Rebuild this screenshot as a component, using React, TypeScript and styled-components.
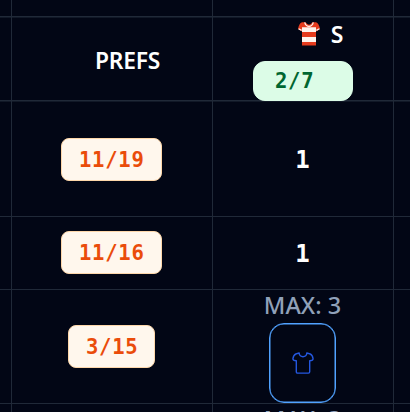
import React from "react";
import styled, { createGlobalStyle } from "styled-components";

const GlobalStyle = createGlobalStyle`
  * { box-sizing: border-box; }
  body { margin: 0; background: #020615; overflow: hidden; }
`;

const Grid = styled.main`
  display: grid;
  grid-template-columns: 12px 201px 181px 16px;
  grid-template-rows: 17px 84px 116px 73px 114px 8px;
  width: 410px;
  height: 412px;
  overflow: hidden;
  color: #fff;
  background: #020615;
  font-family: "Noto Sans", sans-serif;
`;

const Cell = styled.div<{ $top?: number; $last?: boolean; $header?: boolean }>`
  display: flex;
  flex-direction: column;
  align-items: center;
  min-width: 0;
  min-height: 0;
  padding-top: ${(p) => p.$top ?? 0}px;
  padding-right: 1px;
  border-right: ${(p) => (p.$last ? 0 : 1)}px solid #202938;
  border-bottom: 1px solid #202938;
  box-shadow: ${(p) => (p.$header ? "0 1px #111827" : "none")};
`;

const ClippedCell = styled(Cell)`
  overflow: hidden;
  border-bottom: 0;
`;

const Heading = styled.span`
  font-size: 22.8px;
  font-weight: 600;
  line-height: 30px;
  letter-spacing: -0.2px;
  padding-left: 32px;
`;

const ShiftHeading = styled.div`
  display: flex;
  align-items: center;
  gap: 11px;
  height: 32px;
  padding-left: 36px;
`;

const ShiftName = styled.span`
  font-size: 23px;
  font-weight: 600;
  line-height: 32px;
`;

const Pill = styled.span<{ $tone: "orange" | "green"; $width: number }>`
  flex: none;
  width: ${(p) => p.$width}px;
  height: ${(p) => (p.$tone === "green" ? 40 : 43)}px;
  border-radius: ${(p) => (p.$tone === "green" ? 12 : 8)}px;
  border: 1px solid ${(p) => (p.$tone === "green" ? "#dcfce7" : "#fed7aa")};
  color: ${(p) => (p.$tone === "green" ? "#016630" : "#ea4c0a")};
  background: ${(p) => (p.$tone === "green" ? "#dcfce7" : "#fff7ed")};
  padding-left: ${(p) => (p.$tone === "green" ? 21 : 17)}px;
  font: bold 20.6px / ${(p) => (p.$tone === "green" ? 39 : 43)}px "DejaVu Sans Mono", monospace;
  letter-spacing: 0.7px;
  white-space: nowrap;
`;

const HeaderPill = styled(Pill)`
  position: relative;
  z-index: 1;
  margin-top: 11px;
  margin-left: 1px;
`;

const Count = styled.span`
  font: bold 24px / 34px "DejaVu Sans Mono", monospace;
`;

const Limit = styled.span`
  flex: none;
  color: #90a1b9;
  font-size: 23.5px;
  font-weight: 500;
  line-height: 30px;
  white-space: nowrap;
`;

const ShirtButton = styled.button`
  display: flex;
  flex: none;
  align-items: center;
  justify-content: center;
  width: 67px;
  height: 80px;
  margin-top: 3px;
  padding: 0;
  border: 1px solid #51a2ff;
  box-shadow: inset 0 0 0 0.5px #51a2ff;
  border-radius: 15px;
  background: transparent;
`;

const StripedShirt = () => (
  <svg width="22" height="24" viewBox="0 0 22 24">
    <path d="M4 .3H7.5Q11 5 14.5 .3H18Q21 1.5 22 7L18 9.5V23.5H4V9.5L0 7Q1 1.5 4 .3Z" fill="#e63b1d" />
    <path d="M4 5.2H18V10H4ZM4 15H18V20H4Z" fill="#fff5ee" />
    <path d="M6.7 .3Q7.8 4.3 11 4.3T15.3 .3M.6 6.7L3.6 8.4M21.4 6.7L18.4 8.4" fill="none" stroke="#fff5ee" strokeWidth="1.3" />
  </svg>
);

const OutlineShirt = () => (
  <svg width="22" height="22" viewBox="0 0 22 22" fill="none" stroke="#2457df" strokeWidth="1.4" strokeLinejoin="round">
    <path d="M7.2 .9C6.9 6 15.1 6 14.8 .9L18.2 2Q20.6 3 21.1 6.8Q21 8.8 17.7 8.8V19.8Q17.7 21.1 16.4 21.1H5.6Q4.3 21.1 4.3 19.8V8.8Q1 8.8 .9 6.8Q1.4 3 3.8 2Z" />
  </svg>
);

export default function App() {
  return (
    <>
      <GlobalStyle />
      <Grid>
        <Cell $header /><Cell $header /><Cell $header /><Cell $header $last />

        <Cell $header />
        <Cell $header $top={29}><Heading>PREFS</Heading></Cell>
        <Cell $header $top={1}>
          <ShiftHeading><StripedShirt /><ShiftName>S</ShiftName></ShiftHeading>
          <HeaderPill $tone="green" $width={100}>2/7</HeaderPill>
        </Cell>
        <Cell $header $last />

        <Cell />
        <Cell $top={37}><Pill $tone="orange" $width={101}>11/19</Pill></Cell>
        <Cell $top={42}><Count>1</Count></Cell>
        <Cell $last />

        <Cell />
        <Cell $top={14}><Pill $tone="orange" $width={101}>11/16</Pill></Cell>
        <Cell $top={20}><Count>1</Count></Cell>
        <Cell $last />

        <Cell />
        <Cell $top={35}><Pill $tone="orange" $width={87}>3/15</Pill></Cell>
        <Cell>
          <Limit>MAX: 3</Limit>
          <ShirtButton aria-label="Shirt"><OutlineShirt /></ShirtButton>
        </Cell>
        <Cell $last />

        <ClippedCell /><ClippedCell />
        <ClippedCell><Limit>MAX: 3</Limit></ClippedCell>
        <ClippedCell $last />
      </Grid>
    </>
  );
}
